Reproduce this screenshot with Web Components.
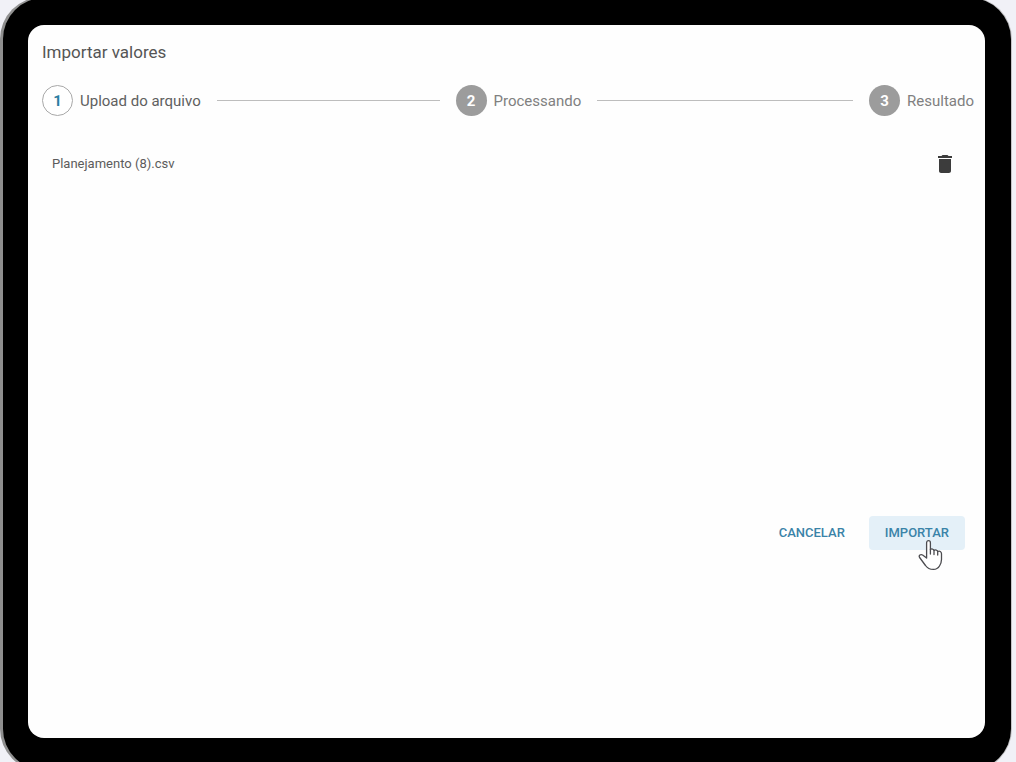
<!DOCTYPE html>
<html lang="pt-BR">
<head>
<meta charset="utf-8">
<title>Importar valores</title>
<style>
  body { margin: 0; background: #f1f1f7; font-family: Roboto, "Liberation Sans", sans-serif; color: #555; }
</style>
</head>
<body>
<device-frame>
  <import-dialog heading="Importar valores">
    <step-list slot="steps">
      <step-item number="1" current>Upload do arquivo</step-item>
      <step-item number="2">Processando</step-item>
      <step-item number="3" last>Resultado</step-item>
    </step-list>
    <file-row>Planejamento (8).csv</file-row>
    <action-button slot="actions">CANCELAR</action-button>
    <action-button slot="actions" active>IMPORTAR<hand-pointer slot="pointer"></hand-pointer></action-button>
  </import-dialog>
</device-frame>
<script>
const define = (name, html) => customElements.define(name, class extends HTMLElement {
  constructor() {
    super();
    const t = document.createElement('template');
    t.innerHTML = html;
    this.attachShadow({ mode: 'open' }).append(t.content.cloneNode(true));
    for (const el of this.shadowRoot.querySelectorAll('[data-attr]'))
      el.textContent = this.getAttribute(el.dataset.attr);
  }
});

define('device-frame', `
<style>
  :host { display: block; height: 100vh; overflow: hidden; }
  .case { box-sizing: border-box; height: calc(100% + 12px); margin: -3px 4px 0 0; padding: 1px 1px 1px 3px;
    border-radius: 42px; background: linear-gradient(90deg, #8e8e8e, #a9a9a9 10%, #c4c4c6); }
  .bezel { box-sizing: border-box; height: 100%; padding: 27px 26px 32px 25px; border-radius: 41px; background: #000; }
  .screen { height: 100%; border-radius: 16px; background: #fefefe; overflow: hidden; }
</style>
<div class="case"><div class="bezel"><main class="screen"><slot></slot></main></div></div>`);

define('import-dialog', `
<style>
  :host { display: flex; flex-direction: column; padding: 14px 11px 0 14px; }
  h1 { margin: 0 0 20px; font-size: 17px; font-weight: 400; line-height: 26px; color: #555; }
  .files { min-height: 368px; padding: 32px 10px 0; }
  footer { display: flex; justify-content: flex-end; gap: 8px; padding-right: 9px; }
</style>
<h1 data-attr="heading"></h1>
<slot name="steps"></slot>
<div class="files"><slot></slot></div>
<footer><slot name="actions"></slot></footer>`);

define('step-list', `
<style>
  :host { display: grid; grid-template-columns: 1fr 1fr auto; }
</style>
<slot></slot>`);

define('step-item', `
<style>
  :host { display: flex; align-items: center; font-size: 15px; line-height: 24px; color: #808080; }
  :host([current]) { color: #606060; }
  .badge { box-sizing: border-box; display: grid; place-items: center; width: 31px; height: 31px; margin-right: 7px;
    border-radius: 50%; background: #9c9c9c; color: #fff; font-weight: 700; }
  :host([current]) .badge { border: 1px solid #a8a8a8; background: #fff; color: #2b7fa3; }
  .line { flex: 1; height: 1px; margin: 0 16px; background: #bdbdbd; }
  :host([last]) .line { display: none; }
</style>
<span class="badge" data-attr="number"></span><span><slot></slot></span><span class="line"></span>`);

define('file-row', `
<style>
  :host { display: flex; align-items: center; justify-content: space-between; font-size: 13px; line-height: 24px; color: #5c5c5c; }
  button { display: block; width: 38px; height: 32px; padding: 4px 7px; border: 0; background: none; cursor: pointer; }
  svg { display: block; }
</style>
<span><slot></slot></span>
<button type="button" aria-label="Excluir arquivo"><svg width="24" height="24" viewBox="0 0 24 24" fill="#3c3c3c"><path d="M6 19c0 1.1.9 2 2 2h8c1.100 0 2-.9 2-2V7H6v12zM19 4h-3.500l-1-1h-5l-1 1H5v2h14V4z"/></svg></button>`);

define('action-button', `
<style>
  :host { display: block; position: relative; }
  button { display: block; height: 34px; padding: 0 16px; border: 0; border-radius: 4px; background: none;
    font: 500 13px/34px Roboto, "Liberation Sans", sans-serif; color: #3a83a8; cursor: pointer; }
  :host([active]) button { background: #e4f0f8; }
</style>
<button type="button"><slot></slot></button><slot name="pointer"></slot>`);

define('hand-pointer', `
<style>
  :host { display: block; position: absolute; left: 49px; top: 23px; pointer-events: none; }
  svg { display: block; }
</style>
<svg width="26" height="32" viewBox="0 0 26 32" fill="#fff" stroke="#4c4c50" stroke-width="1.300" stroke-linejoin="round" stroke-linecap="round">
  <path d="M8.600 19V3.700C8.600 1 12.400 1 12.400 3.700V10.500C13.500 9.500 15.700 9.900 16 11.400C17.300 10.500 19.400 11 19.700 12.500C21.600 11.600 23.500 12.600 23.500 14.800V20.500C23.500 23 22.700 25 21.500 27C20 29.400 18 30.400 15.500 30.400C12 30.400 9.500 29.500 7.500 26.500L1.600 18.500C0.400 16.500 2.600 14.800 4.600 16L8.600 19"/>
  <path d="M12.400 10.500V15M16 11.400V15.500M19.700 12.500V16" fill="none"/>
</svg>`);
</script>
</body>
</html>
